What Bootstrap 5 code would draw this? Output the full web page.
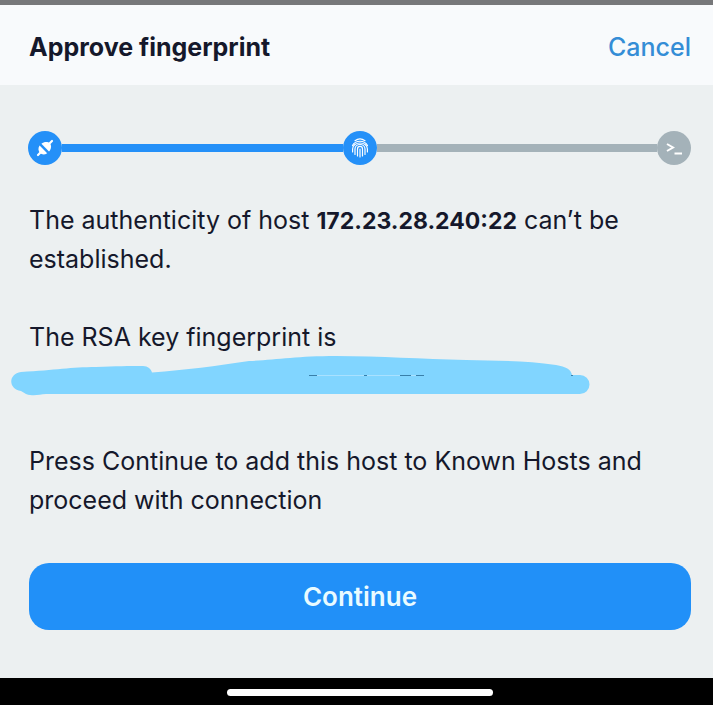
<!DOCTYPE html>
<html lang="en">
<head>
<meta charset="utf-8">
<meta name="viewport" content="width=device-width, initial-scale=1">
<title>Approve fingerprint</title>
<link href="https://cdn.jsdelivr.net/npm/bootstrap@5.3.0/dist/css/bootstrap.min.css" rel="stylesheet">
<style>
  body { font-family: Inter, "Liberation Sans", sans-serif; font-size: 25px; line-height: 39px; color: #15182b; background: #ecf0f1; }
  .status-edge { height: 5px; background: #77787a; }
  .title-bar { background: #f8fafc; padding: 22px 22px 18px 29px; min-height: 80px; }
  .title-bar h1 { font-size: 25px; line-height: 40px; }
  .cancel-link { color: #348dd6; font-weight: 500; line-height: 40px; }
  .content { padding: 46px 22px 48px 28px; }
  .steps { margin-bottom: 36px; }
  .step-dot { width: 34px; height: 34px; background: #2490f8; color: #fff; }
  .step-dot svg { display: block; }
  .step-line { height: 8px; background: #2490f8; }
  .step-dot.pending, .step-line.pending { background: #a4b2b9; }
  .message, .action { padding-left: 1px; }
  .message p { margin-bottom: 39px; }
  .message strong { font-size: 23px; line-height: 1; }
  .message .key-label { margin-bottom: 0; }
  .redaction { display: block; width: 580px; max-width: 100%; margin: -1px 0 46px -18px; }
  .action { padding-top: 43px; }
  .continue-btn { --bs-btn-bg: #2190f8; --bs-btn-hover-bg: #147fe4; --bs-btn-active-bg: #0f74d3; --bs-btn-border-color: transparent; --bs-btn-color: #e9fbff; display: block; border: 0; border-radius: 20px; font-size: 26px; font-weight: 600; min-height: 67px; }
  .home-bar { height: 28px; padding-left: 6px; }
  .home-pill { width: 266px; height: 7px; }
</style>
<script defer src="https://cdn.jsdelivr.net/npm/bootstrap@5.3.0/dist/js/bootstrap.bundle.min.js"></script>
</head>
<body class="d-flex flex-column min-vh-100">
  <div class="status-edge flex-shrink-0"></div>
  <header class="title-bar d-flex align-items-center justify-content-between">
    <h1 class="fw-bold m-0">Approve fingerprint</h1>
    <a href="#" class="cancel-link text-decoration-none">Cancel</a>
  </header>

  <main class="content flex-grow-1">
    <div class="steps d-flex align-items-center" role="group" aria-label="Connection progress">
      <span class="step-dot rounded-circle d-flex align-items-center justify-content-center flex-shrink-0">
        <svg width="18" height="18" viewBox="0 0 18 18" fill="none" stroke="currentColor" aria-hidden="true">
          <path d="M3.600 6.600 L11.200 14.200 C8.500 16 5.600 15.600 4 14 C2.200 12.200 1.800 9.200 3.600 6.600Z" fill="currentColor" stroke="none"/>
          <path d="M5.400 4.800 C8 2.300 12 2.400 13.800 4.200 C15.600 6 15.600 9.800 13 12.400Z" fill="currentColor" stroke="none"/>
          <path d="M2 16 L5 13 M13 5 L16 2" stroke-width="2.200" stroke-linecap="round"/>
        </svg>
      </span>
      <span class="step-line flex-fill"></span>
      <span class="step-dot rounded-circle d-flex align-items-center justify-content-center flex-shrink-0">
        <svg width="18" height="20" viewBox="0 0 18 20" fill="none" stroke="currentColor" stroke-width="1.2" stroke-linecap="round" aria-hidden="true">
          <path d="M4 2.7 C7 .5 11 .5 14 2.7"/>
          <path d="M1.5 7.5 C4.5 1.8 13.5 1.8 16.5 7.5"/>
          <path d="M1.6 14 V11 C1.6 3 16.4 3 16.4 11 V14"/>
          <path d="M4 16.5 V11 C4 5 14 5 14 11 V16.5"/>
          <path d="M6.5 18 V11 C6.5 7.6 11.5 7.6 11.5 11 V18"/>
          <path d="M9 11 V19"/>
        </svg>
      </span>
      <span class="step-line pending flex-fill"></span>
      <span class="step-dot pending rounded-circle d-flex align-items-center justify-content-center flex-shrink-0">
        <svg width="18" height="14" viewBox="0 0 18 14" fill="none" stroke="currentColor" stroke-width="2" aria-hidden="true">
          <path d="M2 3 L8 6.500 L2 10 M9.500 12.500 H17"/>
        </svg>
      </span>
    </div>

    <div class="message">
      <p>The authenticity of host <strong>172.23.28.240:22</strong> can’t be established.</p>
      <p class="key-label">The RSA key fingerprint is</p>
      <svg class="redaction" viewBox="0 0 580 40" role="img" aria-label="Fingerprint hidden">
        <path fill="#81d5ff" d="M10 16 C45 14 60 11 85 11 C105 10 118 10 132 10 C137 10 140 13 141 16.500 C175 14 205 10 238 5 C265 4 285 0 325 0 C370 0 410 3 455 4 C485 5 515 4 545 9 C555 11 560 13 561 19 H569 A9.500 9.500 0 0 1 569 38 H35 C28 38 24 41 15 38 L10 35 C-3 33 -3 18 10 16Z"/>
        <path fill="none" stroke="#a9e1ff" d="M305 19.500 H413"/>
        <path fill="none" stroke="#397fa9" d="M298 19.500 H306 M353 19.500 H356 M389 19.500 H400 M405 19.500 H413 M560 19.500 H562"/>
      </svg>
      <p class="mb-0">Press Continue to add this host to Known Hosts and proceed with connection</p>
    </div>
    <div class="action">
      <button type="button" class="continue-btn btn btn-primary w-100">Continue</button>
    </div>
  </main>

  <footer class="home-bar bg-black d-flex align-items-center justify-content-center flex-shrink-0">
    <div class="home-pill bg-white rounded-pill"></div>
  </footer>
</body>
</html>
